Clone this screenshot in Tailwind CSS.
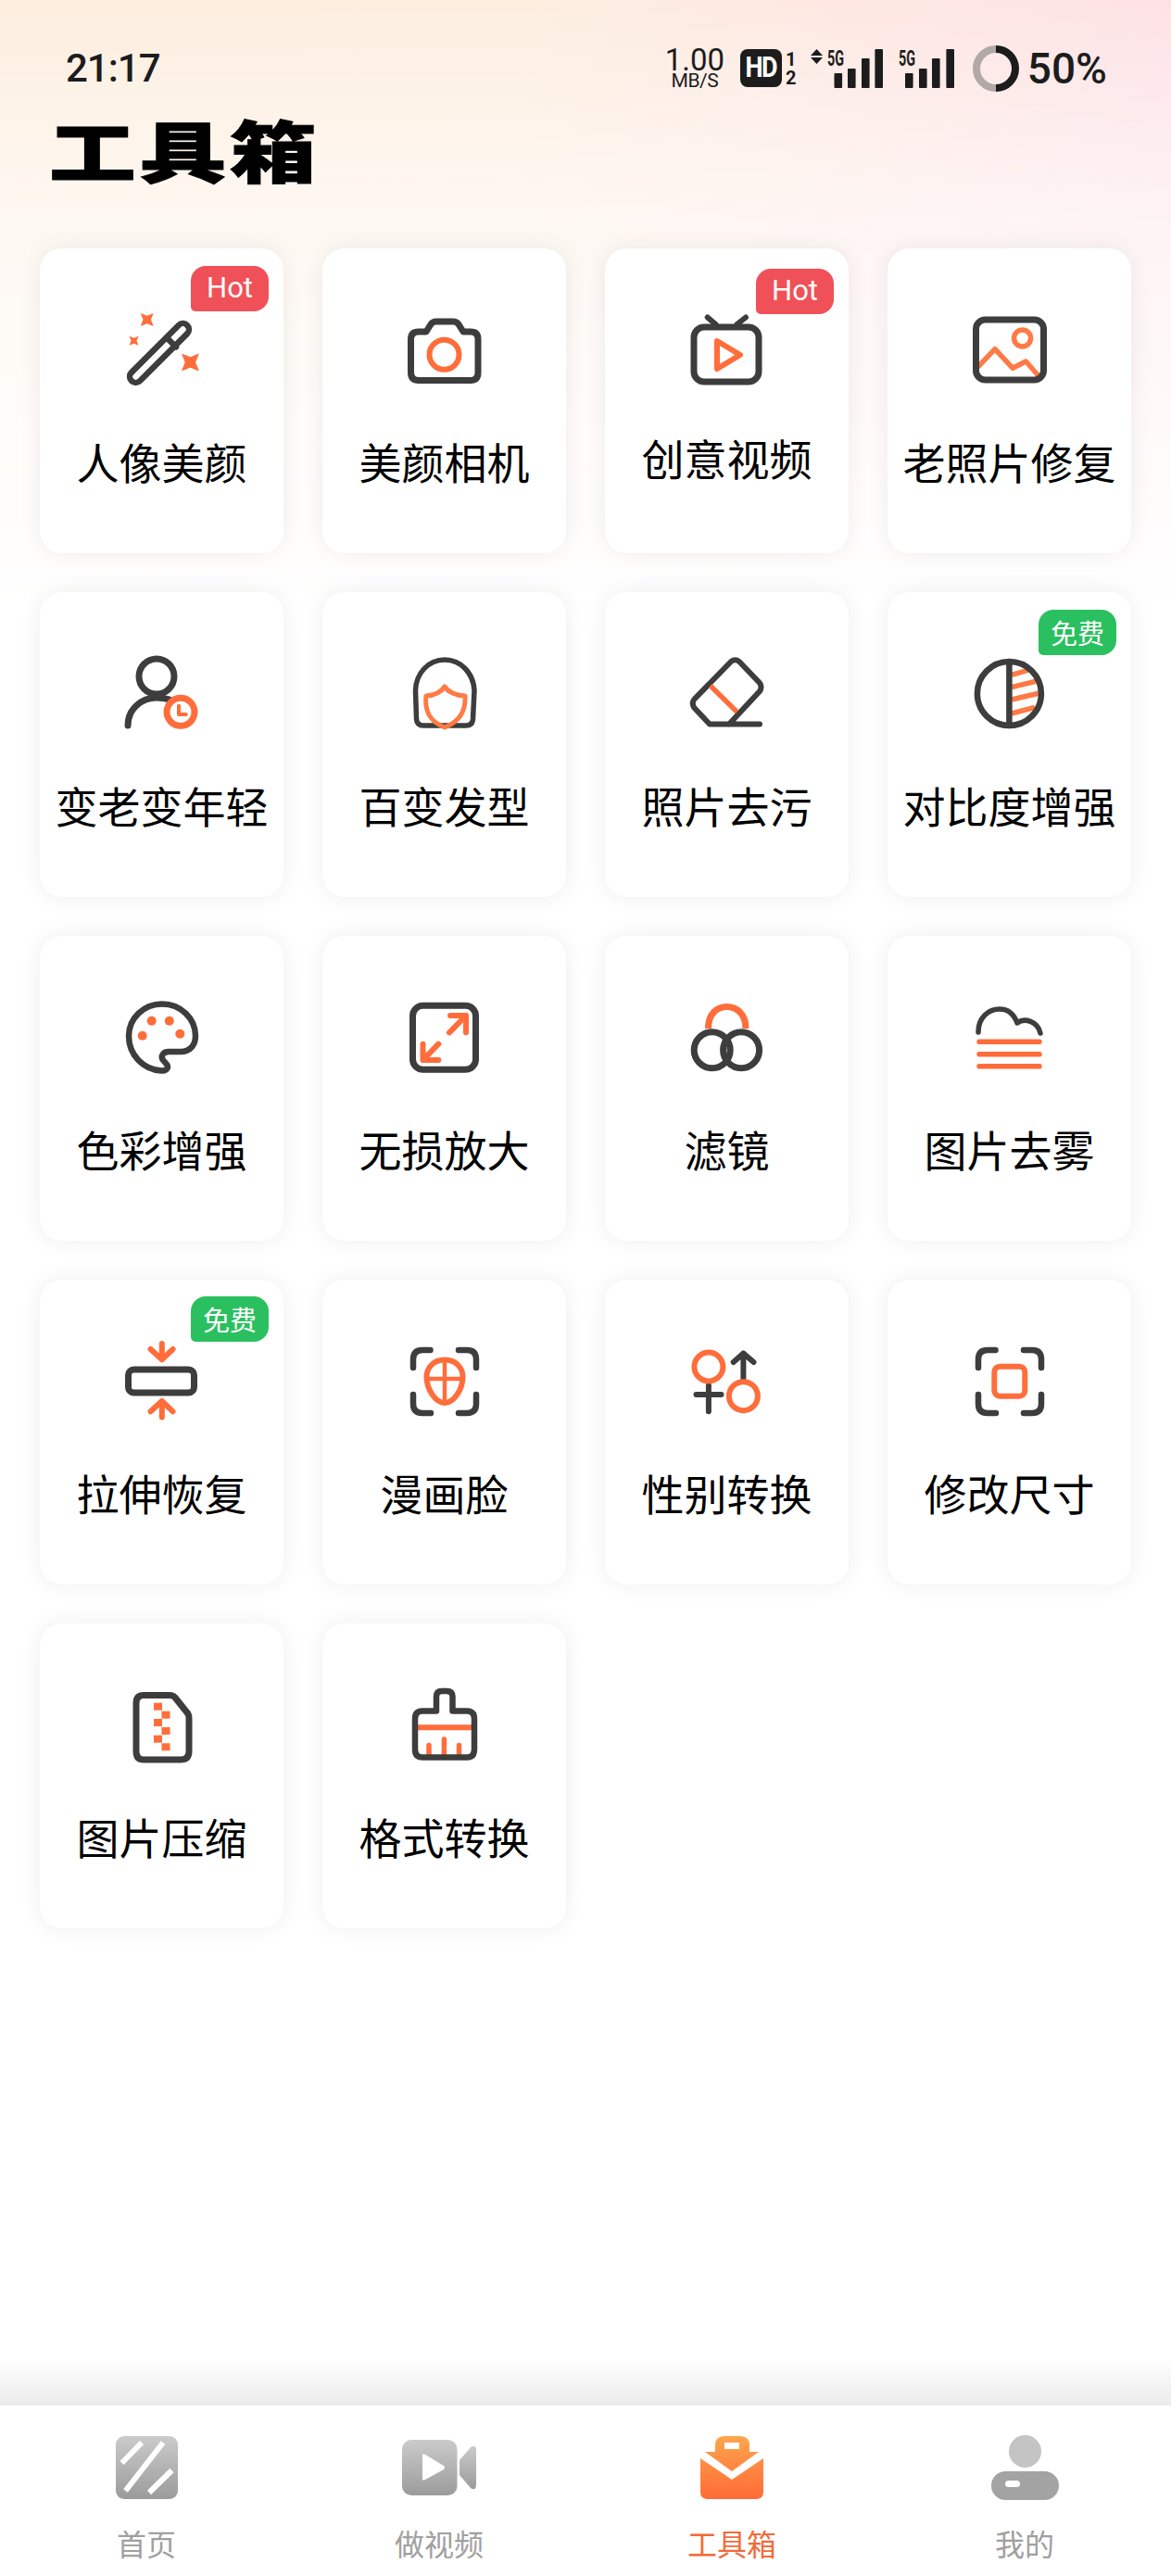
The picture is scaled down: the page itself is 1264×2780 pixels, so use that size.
<!DOCTYPE html>
<html lang="zh">
<head>
<meta charset="utf-8">
<title>工具箱</title>
<script src="https://cdn.jsdelivr.net/npm/@tailwindcss/browser@4"></script>
</head>
<body class="m-0 bg-white">
<div class="flex flex-col w-[1264px] h-[2780px] overflow-hidden font-['Noto_Sans_CJK_SC','Noto_Sans',sans-serif] bg-[linear-gradient(180deg,rgba(255,255,255,0)_0px,rgba(255,255,255,0.6)_240px,#ffffff_660px),linear-gradient(90deg,#fdeedf,#fdeee0_45%,#fde2e5)]">

  <!-- status bar -->
  <div class="flex items-center justify-between h-[49px] mt-[49px] pl-[71px] pr-[69px] font-['Roboto',sans-serif] text-[#1c1c1c]">
    <span class="text-[42px] font-medium leading-none tracking-[-1px]">21:17</span>
    <div class="flex items-center">
      <div class="flex flex-col items-center w-[64px]">
        <span class="text-[33px] leading-[27px]">1.00</span>
        <span class="text-[21px] leading-[19px] tracking-[-0.5px]">MB/S</span>
      </div>
      <div class="flex items-center justify-center ml-[17px] w-[45px] h-[41px] rounded-[8px] bg-[#1c1c1c] text-white text-[27px] font-bold tracking-[-1.5px] [&>span]:scale-y-[1.15]"><span>HD</span></div>
      <div class="flex flex-col items-center ml-[6px] w-[8px] text-[20px] leading-[20px] font-bold"><span>1</span><span>2</span></div>
      <svg class="ml-[17px] overflow-visible" width="78" height="46" viewBox="0 0 78 46" fill="#1c1c1c">
        <path d="M6.5 2L13 9H0ZM6.5 18L0 11H13Z"/>
        <text x="18" y="20" font-family="Roboto" font-size="24" font-weight="700" textLength="18" lengthAdjust="spacingAndGlyphs">5G</text>
        <rect x="25.5" y="28" width="8.6" height="16" rx="1"/><rect x="40" y="23" width="8.6" height="21" rx="1"/><rect x="55" y="12" width="8.6" height="32" rx="1"/><rect x="69.4" y="2" width="8.6" height="42" rx="1"/>
      </svg>
      <svg class="ml-[17px] overflow-visible" width="60" height="46" viewBox="0 0 60 46" fill="#1c1c1c">
        <text x="0" y="20" font-family="Roboto" font-size="24" font-weight="700" textLength="18" lengthAdjust="spacingAndGlyphs">5G</text>
        <rect x="7" y="28" width="8.6" height="16" rx="1"/><rect x="22" y="23" width="8.6" height="21" rx="1"/><rect x="36" y="12" width="8.6" height="32" rx="1"/><rect x="51.4" y="2" width="8.6" height="42" rx="1"/>
      </svg>
      <svg class="ml-[20px]" width="50" height="50" viewBox="0 0 50 50" fill="none" stroke-width="8">
        <path d="M25 4A21 21 0 0 0 25 46" stroke="#b1a9a8"/>
        <path d="M25 4A21 21 0 0 1 25 46" stroke="#1c1c1c"/>
      </svg>
      <span class="ml-[9px] text-[46px] leading-none font-medium">50%</span>
    </div>
  </div>

  <!-- title -->
  <h1 class="mt-[22px] ml-[53px] h-[80px] w-[280px] origin-left scale-x-[1.3] text-[72px] leading-[80px] font-black text-black tracking-[3px] whitespace-nowrap [-webkit-text-stroke:1px_black]">工具箱</h1>

  <!-- tools -->
  <main class="grid grid-cols-[repeat(4,263px)] auto-rows-[329px] gap-[42px] mt-[68px] ml-[43px]">

    <a class="relative flex flex-col items-center pt-[68px] rounded-3xl bg-white shadow-[0_0_24px_rgba(0,0,0,0.07)]">
      <span class="absolute top-[19px] right-[16px] flex items-center justify-center w-[84px] h-[49px] rounded-[16px] rounded-bl-[5px] bg-[#f05158] text-white text-[31px] font-['Roboto',sans-serif]">Hot</span>
      <svg class="overflow-visible" width="80" height="80" viewBox="0 0 80 80" fill="none" stroke="#3d3d3d" stroke-width="6.5" stroke-linecap="round" stroke-linejoin="round">
        <rect x="-5.5" y="38.5" width="85" height="13" rx="6.5" transform="rotate(-45 37 45)"/>
        <path d="M46 29.5L55 38.5"/>
        <g fill="#ff6d3b" stroke="none">
          <path d="M-1-1L0-.6 1-1 .6 0 1 1 0 .6-1 1-.6 0Z" transform="translate(23.7 9) scale(7)"/>
          <path d="M-1-1L0-.6 1-1 .6 0 1 1 0 .6-1 1-.6 0Z" transform="translate(9.5 31.7) scale(5)"/>
          <path d="M-1-1L0-.6 1-1 .6 0 1 1 0 .6-1 1-.6 0Z" transform="translate(70.4 55) scale(9.5)"/>
        </g>
      </svg>
      <span class="mt-[51px] text-[46px] leading-[60px] text-black whitespace-nowrap">人像美颜</span>
    </a>

    <a class="relative flex flex-col items-center pt-[68px] rounded-3xl bg-white shadow-[0_0_24px_rgba(0,0,0,0.07)]">
      <svg class="overflow-visible" width="80" height="80" viewBox="0 0 80 80" fill="none" stroke="#3d3d3d" stroke-width="7" stroke-linecap="round" stroke-linejoin="round">
        <path d="M12 22H20L25 14Q27 11 31 11H49Q53 11 55 14L60 22H68Q76 22 76 30V66Q76 74.5 68 74.5H12Q3.5 74.5 3.5 66V30Q3.5 22 12 22Z"/>
        <circle cx="39.5" cy="46.7" r="16" stroke="#ff6d3b" stroke-width="6"/>
      </svg>
      <span class="mt-[51px] text-[46px] leading-[60px] text-black whitespace-nowrap">美颜相机</span>
    </a>

    <a class="relative flex flex-col items-center pt-[68px] rounded-3xl bg-white shadow-[0_0_24px_rgba(0,0,0,0.07)]">
      <span class="absolute top-[22px] right-[16px] flex items-center justify-center w-[84px] h-[49px] rounded-[16px] rounded-bl-[5px] bg-[#f05158] text-white text-[31px] font-['Roboto',sans-serif]">Hot</span>
      <svg class="overflow-visible" width="80" height="80" viewBox="0 0 80 80" fill="none" stroke="#3d3d3d" stroke-width="7" stroke-linecap="round" stroke-linejoin="round">
        <rect x="4" y="17" width="70" height="59" rx="11"/>
        <path d="M18.7 6.5L27.5 14M60 6.5L50.5 14" stroke-width="6"/>
        <path d="M29 32L54 47L29 62Z" stroke="#ff6d3b" stroke-width="6"/>
      </svg>
      <span class="mt-[47px] text-[46px] leading-[60px] text-black whitespace-nowrap">创意视频</span>
    </a>

    <a class="relative flex flex-col items-center pt-[68px] rounded-3xl bg-white shadow-[0_0_24px_rgba(0,0,0,0.07)]">
      <svg class="overflow-visible" width="80" height="80" viewBox="0 0 80 80" fill="none" stroke="#3d3d3d" stroke-width="7" stroke-linecap="round" stroke-linejoin="round">
        <path d="M6.5 59L24 40.7L43.2 61.3L57.4 54L72 70.7" stroke="#ff7a45" stroke-width="5.5"/>
        <circle cx="53.6" cy="29" r="9" stroke="#ff7a45" stroke-width="5.5"/>
        <rect x="3.5" y="9" width="73" height="65" rx="10"/>
      </svg>
      <span class="mt-[51px] text-[46px] leading-[60px] text-black whitespace-nowrap">老照片修复</span>
    </a>

    <a class="relative flex flex-col items-center pt-[68px] rounded-3xl bg-white shadow-[0_0_24px_rgba(0,0,0,0.07)]">
      <svg class="overflow-visible" width="80" height="80" viewBox="0 0 80 80" fill="none" stroke="#3d3d3d" stroke-width="7" stroke-linecap="round" stroke-linejoin="round">
        <circle cx="34" cy="23" r="19"/>
        <path d="M3 76C3 58 18 46 34 46Q42 46 48 48"/>
        <circle cx="60" cy="61.3" r="15" stroke="#ff6d3b"/>
        <path d="M58 54.7V64H65.8" stroke="#ff6d3b" stroke-width="4"/>
      </svg>
      <span class="mt-[51px] text-[46px] leading-[60px] text-black whitespace-nowrap">变老变年轻</span>
    </a>

    <a class="relative flex flex-col items-center pt-[68px] rounded-3xl bg-white shadow-[0_0_24px_rgba(0,0,0,0.07)]">
      <svg class="overflow-visible" width="80" height="80" viewBox="0 0 80 80" fill="none" stroke="#3d3d3d" stroke-width="5.5" stroke-linecap="round" stroke-linejoin="round">
        <path d="M40 5C22 5 9 20 8.5 38L9.5 69Q10 76 17 76H63Q70 76 70.5 69L72 38C71 20 58 5 40 5Z"/>
        <path d="M40 34Q46 43 62 44C63 62 55 72 40 78C25 72 18 62 20 44Q34 43 40 34Z" stroke="#ff7a45" stroke-width="5"/>
      </svg>
      <span class="mt-[51px] text-[46px] leading-[60px] text-black whitespace-nowrap">百变发型</span>
    </a>

    <a class="relative flex flex-col items-center pt-[68px] rounded-3xl bg-white shadow-[0_0_24px_rgba(0,0,0,0.07)]">
      <svg class="overflow-visible" width="80" height="80" viewBox="0 0 80 80" fill="none" stroke="#3d3d3d" stroke-width="6" stroke-linecap="round" stroke-linejoin="round">
        <path d="M44 7Q48.5 3.5 53 7L75 30Q78 34.5 75 39L42 74.5M75 74.5H21L4.5 57Q1 52 4.5 47.5L44 7"/>
        <path d="M21.8 33L50.5 61.3" stroke="#ff6d3b" stroke-width="5.5" stroke-linecap="butt"/>
      </svg>
      <span class="mt-[51px] text-[46px] leading-[60px] text-black whitespace-nowrap">照片去污</span>
    </a>

    <a class="relative flex flex-col items-center pt-[68px] rounded-3xl bg-white shadow-[0_0_24px_rgba(0,0,0,0.07)]">
      <span class="absolute top-[19px] right-[16px] flex items-center justify-center w-[84px] h-[49px] rounded-[16px] rounded-bl-[5px] bg-[#2bc05f] text-white text-[29px]">免费</span>
      <svg class="overflow-visible" width="80" height="80" viewBox="0 0 80 80" fill="none" stroke="#3d3d3d" stroke-width="6.5" stroke-linecap="round" stroke-linejoin="round">
        <path d="M42 21.3L59.3 16.3M42 34.7L69 28M42 48L71 41.3M42 63L67 56.3" stroke="#ff7a45" stroke-width="5.5" stroke-linecap="butt"/>
        <circle cx="39.4" cy="41.5" r="34.5"/>
        <path d="M39.4 7V76"/>
      </svg>
      <span class="mt-[51px] text-[46px] leading-[60px] text-black whitespace-nowrap">对比度增强</span>
    </a>

    <a class="relative flex flex-col items-center pt-[68px] rounded-3xl bg-white shadow-[0_0_24px_rgba(0,0,0,0.07)]">
      <svg class="overflow-visible" width="80" height="80" viewBox="0 0 80 80" fill="none" stroke="#3d3d3d" stroke-width="6.5" stroke-linecap="round" stroke-linejoin="round">
        <path d="M40 5.5C60 5.5 76 21 76 40C76 50 70 57 60 57H47C41 57 38 62 41 66C43 69 46 70 46 73C46 76 43 78 39 77.5C19 76 4 60 4 40C4 21 20 5.5 40 5.5Z"/>
        <g fill="#ff6d3b" stroke="none"><circle cx="28.7" cy="23.7" r="5"/><circle cx="47.8" cy="23.7" r="5"/><circle cx="18.7" cy="39.7" r="5"/><circle cx="59.3" cy="37.7" r="5"/></g>
      </svg>
      <span class="mt-[51px] text-[46px] leading-[60px] text-black whitespace-nowrap">色彩增强</span>
    </a>

    <a class="relative flex flex-col items-center pt-[68px] rounded-3xl bg-white shadow-[0_0_24px_rgba(0,0,0,0.07)]">
      <svg class="overflow-visible" width="80" height="80" viewBox="0 0 80 80" fill="none" stroke="#3d3d3d" stroke-width="7" stroke-linecap="round" stroke-linejoin="round">
        <rect x="5.5" y="7.2" width="68" height="69" rx="11"/>
        <path d="M46 18H63V36.3M63 18L45 36.3M16.5 48.7V66H33.3M16.5 66L33.3 48.7" stroke="#ff6d3b" stroke-width="6"/>
      </svg>
      <span class="mt-[51px] text-[46px] leading-[60px] text-black whitespace-nowrap">无损放大</span>
    </a>

    <a class="relative flex flex-col items-center pt-[68px] rounded-3xl bg-white shadow-[0_0_24px_rgba(0,0,0,0.07)]">
      <svg class="overflow-visible" width="80" height="80" viewBox="0 0 80 80" fill="none" stroke="#3d3d3d" stroke-width="7" stroke-linejoin="round">
        <path d="M19.5 32C19.5 16 29 8.5 39.5 8.5C50 8.5 60 16 60 32" stroke="#ff6d3b"/>
        <circle cx="23.7" cy="55.3" r="19.5"/>
        <circle cx="55.1" cy="55.3" r="19.5"/>
      </svg>
      <span class="mt-[51px] text-[46px] leading-[60px] text-black whitespace-nowrap">滤镜</span>
    </a>

    <a class="relative flex flex-col items-center pt-[68px] rounded-3xl bg-white shadow-[0_0_24px_rgba(0,0,0,0.07)]">
      <svg class="overflow-visible" width="80" height="80" viewBox="0 0 80 80" fill="none" stroke="#3d3d3d" stroke-width="5.5" stroke-linecap="round" stroke-linejoin="round">
        <path d="M6 36C6 20 17 11 29 11C39 11 45 18 48 26C56 20 70 24 73 37"/>
        <path d="M7 46.3H72M7 59.7H72M7 72.7H72" stroke="#ff6d3b"/>
      </svg>
      <span class="mt-[51px] text-[46px] leading-[60px] text-black whitespace-nowrap">图片去雾</span>
    </a>

    <a class="relative flex flex-col items-center pt-[68px] rounded-3xl bg-white shadow-[0_0_24px_rgba(0,0,0,0.07)]">
      <span class="absolute top-[18px] right-[16px] flex items-center justify-center w-[84px] h-[49px] rounded-[16px] rounded-bl-[5px] bg-[#2bc05f] text-white text-[29px]">免费</span>
      <svg class="overflow-visible" width="80" height="80" viewBox="0 0 80 80" fill="none" stroke="#3d3d3d" stroke-width="7" stroke-linecap="round" stroke-linejoin="round">
        <rect x="3.5" y="29" width="71" height="25" rx="6"/>
        <path d="M39.8 1V18.3M27.5 7L39.8 18.3L51.6 7M39.8 80.5V63M27.5 74.3L39.8 63L51.6 74.3" stroke="#ff6d3b" stroke-width="6"/>
      </svg>
      <span class="mt-[51px] text-[46px] leading-[60px] text-black whitespace-nowrap">拉伸恢复</span>
    </a>

    <a class="relative flex flex-col items-center pt-[68px] rounded-3xl bg-white shadow-[0_0_24px_rgba(0,0,0,0.07)]">
      <svg class="overflow-visible" width="80" height="80" viewBox="0 0 80 80" fill="none" stroke="#3d3d3d" stroke-width="6.5" stroke-linecap="round" stroke-linejoin="round">
        <path d="M24.5 8H16Q6 8 6 18V27M55 8H64Q74 8 74 18V27M6 56V66Q6 76 16 76H25M74 56V66Q74 76 64 76H55"/>
        <path d="M40 18.5C28 18.5 20.5 27 20.5 37C20.5 50 30 65 40 65C50 65 59.5 50 59.5 37C59.5 27 52 18.5 40 18.5Z" stroke="#ff6d3b" stroke-width="6"/>
        <path d="M40 18.5V65M21 39H59" stroke="#ff6d3b" stroke-width="4.5"/>
      </svg>
      <span class="mt-[51px] text-[46px] leading-[60px] text-black whitespace-nowrap">漫画脸</span>
    </a>

    <a class="relative flex flex-col items-center pt-[68px] rounded-3xl bg-white shadow-[0_0_24px_rgba(0,0,0,0.07)]">
      <svg class="overflow-visible" width="80" height="80" viewBox="0 0 80 80" fill="none" stroke="#3d3d3d" stroke-width="6" stroke-linecap="round" stroke-linejoin="round">
        <path d="M19.9 46V74.3M6.5 56H33.5M57.4 41V11.5M46.7 21L57.4 11.5L68.5 21"/>
        <circle cx="19.9" cy="26" r="15.5" stroke="#ff6d3b"/>
        <circle cx="57.4" cy="57.7" r="15.5" stroke="#ff6d3b"/>
      </svg>
      <span class="mt-[51px] text-[46px] leading-[60px] text-black whitespace-nowrap">性别转换</span>
    </a>

    <a class="relative flex flex-col items-center pt-[68px] rounded-3xl bg-white shadow-[0_0_24px_rgba(0,0,0,0.07)]">
      <svg class="overflow-visible" width="80" height="80" viewBox="0 0 80 80" fill="none" stroke="#3d3d3d" stroke-width="6.5" stroke-linecap="round" stroke-linejoin="round">
        <path d="M24.5 8H16Q6 8 6 18V27M55 8H64Q74 8 74 18V27M6 56V66Q6 76 16 76H25M74 56V66Q74 76 64 76H55"/>
        <rect x="23.3" y="25.7" width="33" height="32" rx="6" stroke="#ff6d3b" stroke-width="6"/>
      </svg>
      <span class="mt-[51px] text-[46px] leading-[60px] text-black whitespace-nowrap">修改尺寸</span>
    </a>

    <a class="relative flex flex-col items-center pt-[68px] rounded-3xl bg-white shadow-[0_0_24px_rgba(0,0,0,0.07)]">
      <svg class="overflow-visible" width="80" height="80" viewBox="0 0 80 80" fill="none" stroke="#3d3d3d" stroke-width="7" stroke-linecap="round" stroke-linejoin="round">
        <path d="M20 9.5H48Q52 9.5 54 12L66 27Q69 30 69 34V70Q69 79 60 79H20Q12 79 12 70V18Q12 9.5 20 9.5Z"/>
        <g fill="#ff6d3b" stroke="none"><rect x="31" y="17.7" width="9" height="8"/><rect x="39.5" y="26.7" width="9" height="8"/><rect x="31" y="35" width="9" height="8"/><rect x="39.5" y="44" width="9" height="8"/><rect x="31" y="52.7" width="9" height="8"/><rect x="39.5" y="61.3" width="9" height="8"/></g>
      </svg>
      <span class="mt-[51px] text-[46px] leading-[60px] text-black whitespace-nowrap">图片压缩</span>
    </a>

    <a class="relative flex flex-col items-center pt-[68px] rounded-3xl bg-white shadow-[0_0_24px_rgba(0,0,0,0.07)]">
      <svg class="overflow-visible" width="80" height="80" viewBox="0 0 80 80" fill="none" stroke="#3d3d3d" stroke-width="6.5" stroke-linecap="round" stroke-linejoin="round">
        <path d="M23 63.5V75M39.4 57V75M55.5 63.5V75" stroke="#ff6d3b" stroke-width="5.5"/>
        <path d="M10.5 44.3H70" stroke="#ff6d3b" stroke-width="6" stroke-linecap="butt"/>
        <path d="M31 26.5V11Q31 5 37 5H42Q48.5 5 48.5 11V26.5H64Q72 26.5 72 35V68Q72 76.5 64 76.5H16Q8 76.5 8 68V35Q8 26.5 16 26.5H31Z"/>
      </svg>
      <span class="mt-[51px] text-[46px] leading-[60px] text-black whitespace-nowrap">格式转换</span>
    </a>
  </main>

  <div class="flex-1"></div>

  <!-- bottom navigation -->
  <div class="h-[50px] bg-[linear-gradient(180deg,rgba(236,236,236,0),#ebebeb)]"></div>
  <nav class="grid grid-cols-4 h-[184px] pt-[32px] bg-white">
    <svg width="0" height="0" class="absolute">
      <defs>
        <linearGradient id="g" x1="0" y1="0" x2="0" y2="1"><stop offset="0" stop-color="#cbcbcb"/><stop offset="1" stop-color="#9b9b9b"/></linearGradient>
        <linearGradient id="o" gradientUnits="userSpaceOnUse" x1="0" y1="0" x2="0" y2="68"><stop offset="0" stop-color="#ffa54d"/><stop offset="1" stop-color="#ff6b37"/></linearGradient>
      </defs>
    </svg>
    <div class="flex flex-col items-center">
      <div class="flex items-center justify-center h-[70px]">
        <svg width="67" height="68" viewBox="0 0 67 68">
          <rect width="67" height="68" rx="9" fill="url(#g)"/>
          <path d="M28 7L6.5 29M51 7L10.5 59M60.5 37L36 61" stroke="#fff" stroke-width="6" fill="none" stroke-linecap="butt"/>
        </svg>
      </div>
      <span class="mt-[26px] text-[32px] leading-[40px] text-[#a0a0a0]">首页</span>
    </div>
    <div class="flex flex-col items-center">
      <div class="flex items-center justify-center h-[70px]">
        <svg width="80" height="60" viewBox="0 0 80 60">
          <rect width="59.5" height="60" rx="10" fill="url(#g)"/>
          <path d="M62 22L74 8Q80 4 80 12V48Q80 56 74 52L62 38Z" fill="url(#g)"/>
          <path d="M22 17Q22 14 25 16L45 28Q47 30 45 32L25 43Q22 45 22 42Z" fill="#fff"/>
        </svg>
      </div>
      <span class="mt-[26px] text-[32px] leading-[40px] text-[#a0a0a0]">做视频</span>
    </div>
    <div class="flex flex-col items-center">
      <div class="flex items-center justify-center h-[70px]">
        <svg width="68" height="68" viewBox="0 0 68 68">
          <path fill-rule="evenodd" fill="url(#o)" d="M16 17V10Q16 0 26 0H43Q53 0 53 10V17H63L34 38L5 17ZM26 7V14H42V7Z"/>
          <path d="M0 24L34 47L68 24V60Q68 68 60 68H8Q0 68 0 60Z" fill="url(#o)"/>
        </svg>
      </div>
      <span class="mt-[26px] text-[32px] leading-[40px] text-[#f26b3a]">工具箱</span>
    </div>
    <div class="flex flex-col items-center">
      <div class="flex items-center justify-center h-[70px]">
        <svg width="73" height="70" viewBox="0 0 73 70">
          <ellipse cx="36.5" cy="17.5" rx="17.5" ry="17.5" fill="#c4c4c4"/>
          <rect y="39" width="73" height="31" rx="15.5" fill="#a3a3a3"/>
          <rect x="15" y="49" width="16" height="7" rx="3.5" fill="#fff"/>
        </svg>
      </div>
      <span class="mt-[26px] text-[32px] leading-[40px] text-[#a0a0a0]">我的</span>
    </div>
  </nav>
</div>
</body>
</html>
